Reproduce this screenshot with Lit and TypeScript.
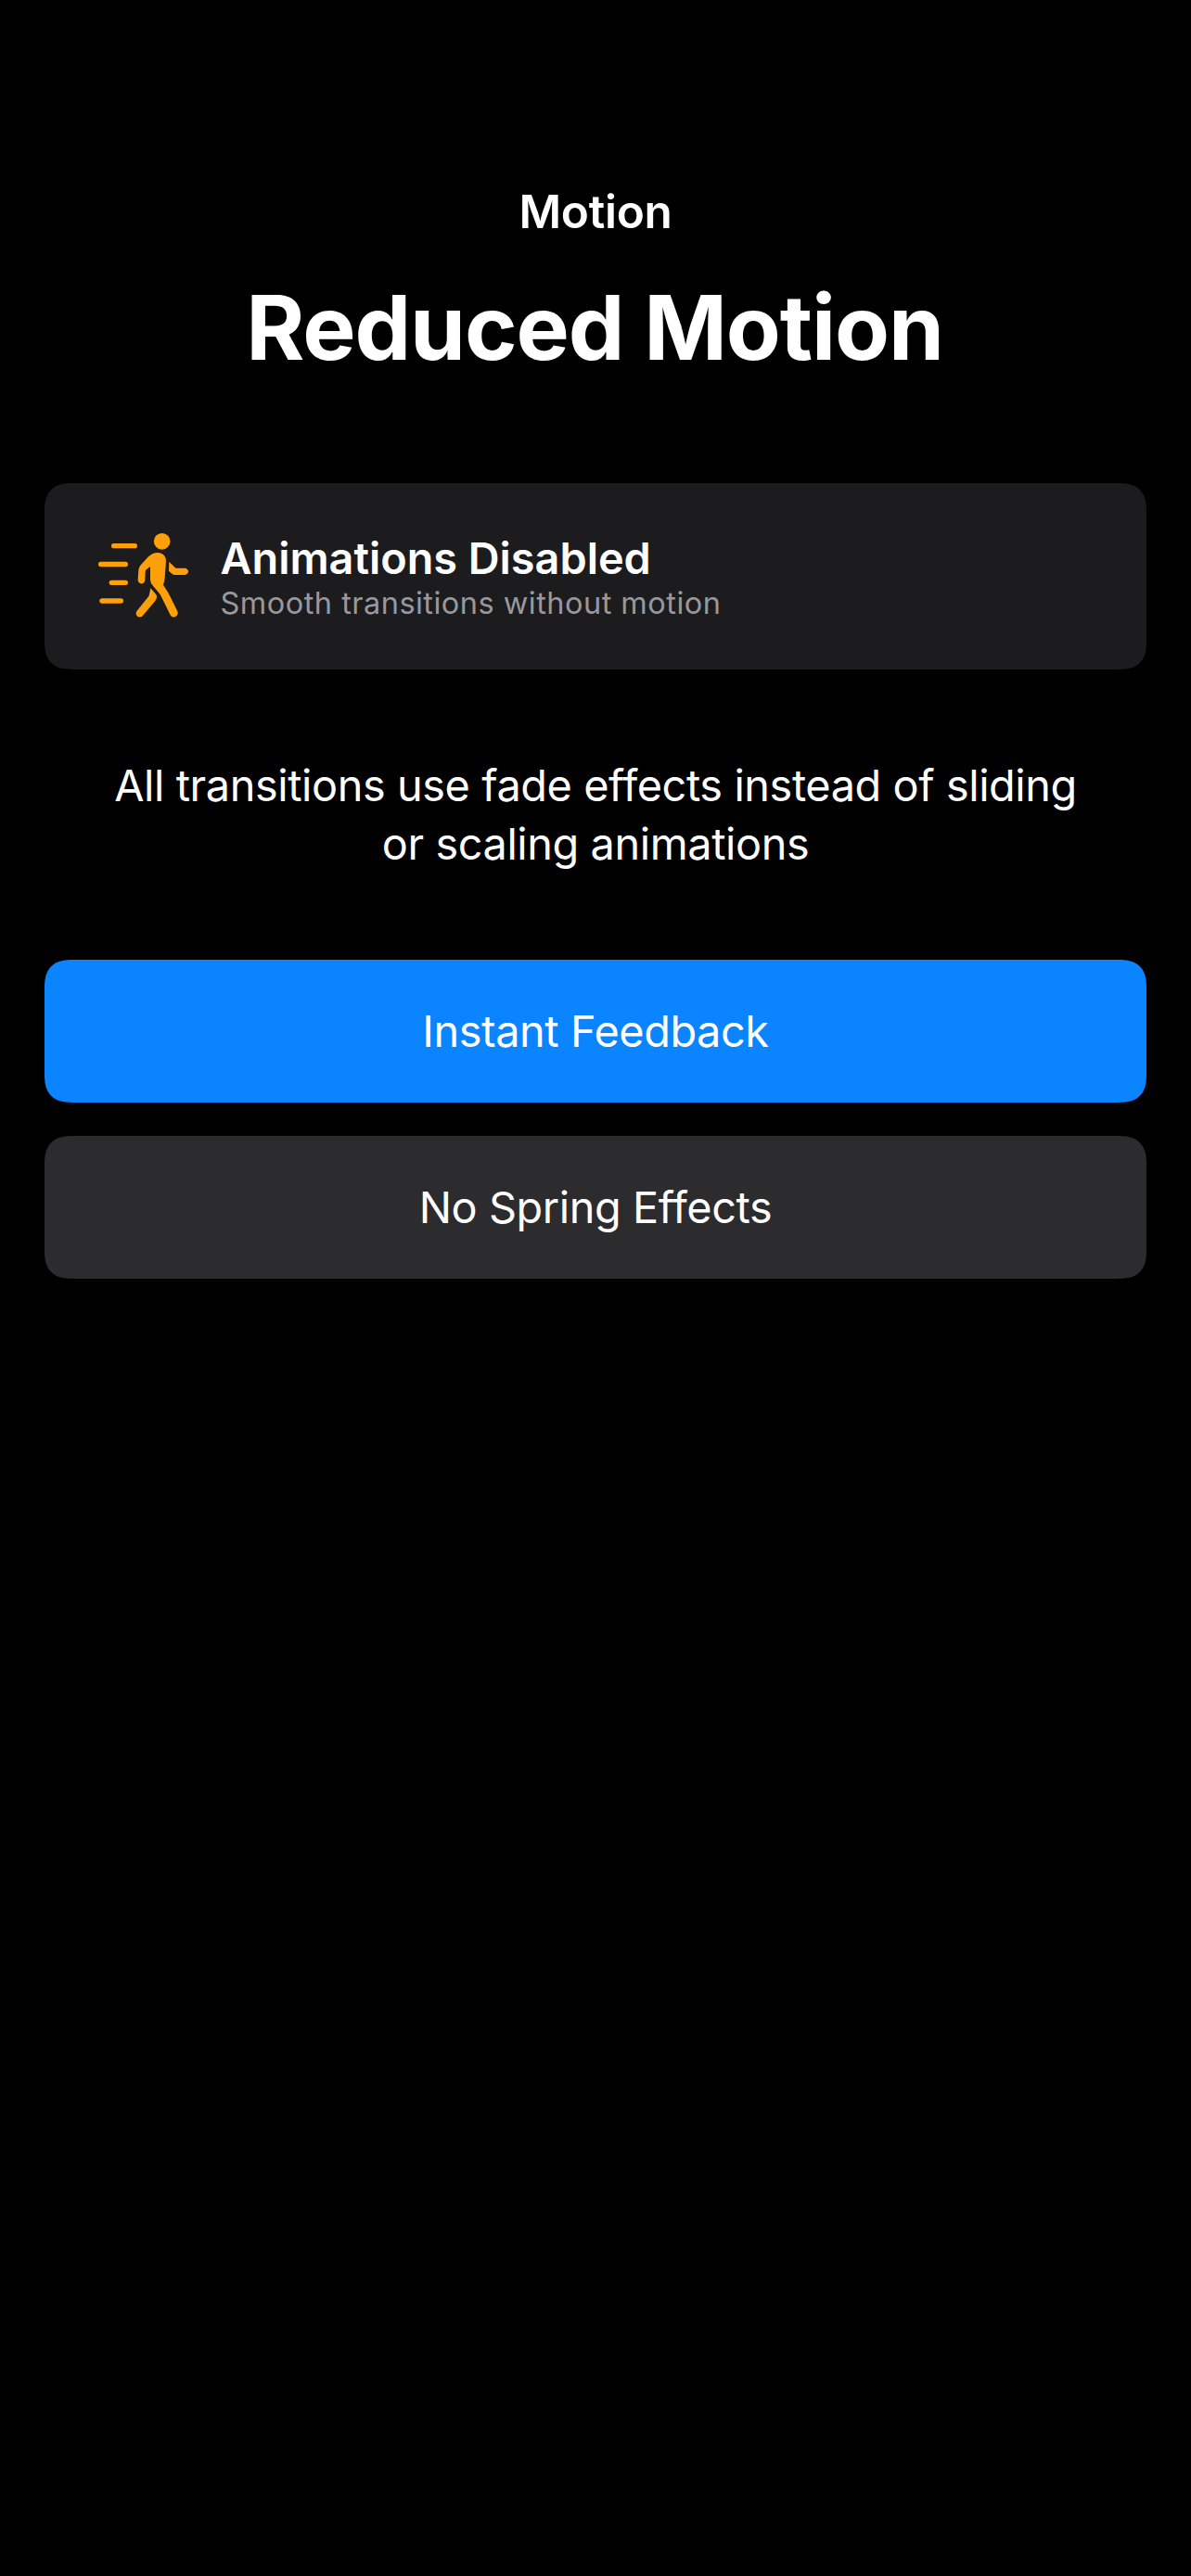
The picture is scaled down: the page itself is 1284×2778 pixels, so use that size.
import { LitElement, html, css } from "lit";
import { customElement } from "lit/decorators.js";

@customElement("app-root")
export class AppRoot extends LitElement {
  static styles = css`
    :host { display: block; min-height: 2778px; background: #000; color: #fff; font-family: Inter, "Liberation Sans", sans-serif; box-sizing: border-box; padding: 198px 48px 0; }
    .nav { font-size: 49.5px; line-height: 60px; font-weight: 600; letter-spacing: -0.25px; text-align: center; }
    .title { margin: 35px 2px 0 0; font-size: 96.3px; line-height: 120px; font-weight: 700; letter-spacing: -1.09px; text-align: center; white-space: nowrap; }
    .card, .btn { border-radius: 31px; corner-shape: superellipse(1.4); }
    .card { margin-top: 108px; height: 200.5px; box-sizing: border-box; padding: 53px 58px 0; background: #1c1c1e; display: flex; align-items: flex-start; gap: 34.5px; }
    .icon { width: 97px; height: 91px; margin-top: 1px; display: block; flex: none; }
    .card-title { font-size: 46.8px; line-height: 57px; font-weight: 600; }
    .card-sub { font-size: 32.5px; line-height: 40px; letter-spacing: 0.48px; color: #98989f; }
    .desc { margin: 94px 0 0; font-size: 46.8px; line-height: 63px; letter-spacing: -0.4px; text-align: center; }
    .buttons { margin-top: 93.5px; display: flex; flex-direction: column; gap: 36px; }
    .btn { height: 154px; padding: 0; border: 0; background: #2c2c2e; color: #fff; font: inherit; font-size: 46.8px; letter-spacing: -0.4px; }
    .primary { background: #0a84ff; }
  `;

  render() {
    return html`
      <div class="nav">Motion</div>
      <h1 class="title">Reduced Motion</h1>
      <section class="card">
        <svg class="icon" viewBox="48 45 291 273" fill="#ff9f0a" aria-hidden="true">
          <rect x="90" y="78" width="84" height="16" rx="8" />
          <rect x="48" y="137.5" width="96" height="16" rx="8" />
          <rect x="83" y="197" width="61" height="16" rx="8" />
          <rect x="52" y="256" width="77" height="16" rx="8" />
          <circle cx="254" cy="71.5" r="26.5" />
          <path d="M240 108C256 108 267 119 267 135L263 190Q262 202 258 212L275 239L304 298C310 311 290 325 281 310L248 243L226 217Q216 206 216 196V153L203 163Q200 166 200 172L199 197C198 212 176 212 176 196L178 164Q179 156 184 149L210 121Q224 108 240 108Z" />
          <path d="M217 223L235 244Q239 250 235 259Q233 264 229 268L191 313C180 324 163 309 173 296L208 253Q212 248 213 243Z" />
          <path d="M277 137L296 156Q297 158 301 158H327C343 158 343 180 327 180H296Q291 180 287 177L276 167Z" />
        </svg>
        <div>
          <div class="card-title">Animations Disabled</div>
          <div class="card-sub">Smooth transitions without motion</div>
        </div>
      </section>
      <p class="desc">All transitions use fade effects instead of sliding<br />or scaling animations</p>
      <div class="buttons">
        <button class="btn primary">Instant Feedback</button>
        <button class="btn">No Spring Effects</button>
      </div>
    `;
  }
}
